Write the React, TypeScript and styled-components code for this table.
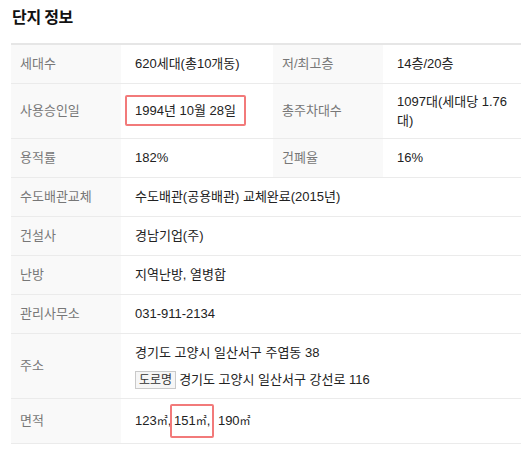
import styled, { createGlobalStyle } from 'styled-components'

const GlobalStyle = createGlobalStyle`
  body {
    margin: 0;
    background: #fff;
    font-family: 'Liberation Sans', 'Noto Sans CJK KR', sans-serif;
    color: #222;
  }
`

const Wrapper = styled.section`
  padding: 0 10px 0 11px;
`

const Title = styled.h2`
  margin: 0;
  padding: 6px 0 0 1px;
  height: 37px;
  font-family: 'Noto Sans CJK KR', sans-serif;
  font-size: 16px;
  font-weight: 700;
  line-height: 20px;
  color: #111;
  letter-spacing: -0.3px;
`

const StyledTable = styled.table`
  width: 510px;
  border-collapse: collapse;
  table-layout: fixed;
  border-top: 2px solid #e6e6e6;
  font-size: 13px;
  line-height: 19px;
`

const StyledTr = styled.tr`
  height: 39px;
  border-bottom: 1px solid #ebebeb;
`

const StyledTh = styled.th`
  padding: 8px 8px 8px 9px;
  text-align: left;
  font-weight: 400;
  color: #777;
  background-color: #f9f9f9;
  vertical-align: middle;
`

const StyledTd = styled.td`
  padding: 8px 8px 8px 14px;
  color: #222;
  vertical-align: middle;
`

const Highlight = styled.span<{ $padX: number; $padY: number; $pull: number }>`
  display: inline-block;
  margin: -${({ $pull }) => $pull}px 0 -${({ $pull }) => $pull}px -${({ $padX }) => $padX + 2}px;
  padding: ${({ $padY }) => $padY}px ${({ $padX }) => $padX}px;
  border: 2px solid #f27a7a;
  border-radius: 2px;
`

const AddressList = styled.div`
  display: flex;
  flex-direction: column;
  gap: 8px;
  padding: 1px 0;
`

const RoadBadge = styled.span`
  display: inline-block;
  margin-right: 3px;
  padding: 0 3px;
  border: 1px solid #c9c9c9;
  background: #f6f6f6;
  font-size: 12px;
  line-height: 16px;
  color: #333;
`

const Unit = styled.span`
  font-size: 11px;
`

type RowProps = {
  label: string
  children: React.ReactNode
  label2?: string
  value2?: React.ReactNode
}

function InfoRow({ label, children, label2, value2 }: RowProps) {
  return (
    <StyledTr>
      <StyledTh>{label}</StyledTh>
      {label2 ? (
        <>
          <StyledTd>{children}</StyledTd>
          <StyledTh>{label2}</StyledTh>
          <StyledTd>{value2}</StyledTd>
        </>
      ) : (
        <StyledTd colSpan={3}>{children}</StyledTd>
      )}
    </StyledTr>
  )
}

export default function App() {
  return (
    <Wrapper>
      <GlobalStyle />
      <Title>단지 정보</Title>
      <StyledTable>
        <colgroup>
          <col style={{ width: 110 }} />
          <col style={{ width: 152 }} />
          <col style={{ width: 110 }} />
          <col />
        </colgroup>
        <tbody>
          <InfoRow label="세대수" label2="저/최고층" value2="14층/20층">
            620세대(총10개동)
          </InfoRow>
          <InfoRow label="사용승인일" label2="총주차대수" value2="1097대(세대당 1.76대)">
            <Highlight $padX={8} $padY={4} $pull={6}>
              1994년 10월 28일
            </Highlight>
          </InfoRow>
          <InfoRow label="용적률" label2="건폐율" value2="16%">
            182%
          </InfoRow>
          <InfoRow label="수도배관교체">수도배관(공용배관) 교체완료(2015년)</InfoRow>
          <InfoRow label="건설사">경남기업(주)</InfoRow>
          <InfoRow label="난방">지역난방, 열병합</InfoRow>
          <InfoRow label="관리사무소">031-911-2134</InfoRow>
          <InfoRow label="주소">
            <AddressList>
              <span>경기도 고양시 일산서구 주엽동 38</span>
              <span>
                <RoadBadge>도로명</RoadBadge>경기도 고양시 일산서구 강선로 116
              </span>
            </AddressList>
          </InfoRow>
          <InfoRow label="면적">
            123<Unit>㎡</Unit>,{' '}
            <Highlight $padX={2} $padY={5} $pull={3} style={{ marginLeft: -5 }}>
              151<Unit>㎡</Unit>,
            </Highlight>{' '}
            190<Unit>㎡</Unit>
          </InfoRow>
        </tbody>
      </StyledTable>
    </Wrapper>
  )
}
